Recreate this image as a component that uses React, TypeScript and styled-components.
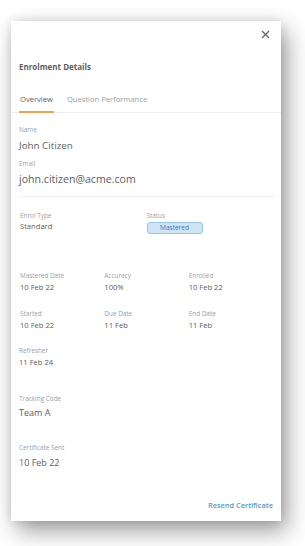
import React from "react";
import styled, { createGlobalStyle } from "styled-components";

const labelColor = "#93a0b3";
const textColor = "#5e5e5e";
const pad = 8;

const GlobalStyle = createGlobalStyle`
  html, body {
    margin: 0;
    padding: 0;
    background: #ffffff;
    font-family: "Open Sans", "Liberation Sans", sans-serif;
  }
`;

const Page = styled.div`
  width: 305px;
  height: 546px;
  overflow: hidden;
  padding: 21px 0 0 11px;
  box-sizing: border-box;
`;

const Card = styled.div`
  width: 270px;
  height: 500px;
  box-sizing: border-box;
  padding: 0 ${pad}px 0;
  background: #fff;
  display: flex;
  flex-direction: column;
  box-shadow: 0 0 10px rgba(0, 0, 0, 0.12), 6px 10px 22px rgba(0, 0, 0, 0.38);
`;

const CloseRow = styled.div`
  height: 26px;
  display: flex;
  justify-content: flex-end;
  align-items: center;
`;

const CloseButton = styled.button`
  border: 0;
  background: none;
  padding: 0;
  margin-right: 3px;
  width: 9px;
  height: 9px;
  display: flex;
  cursor: pointer;
`;

const Title = styled.div`
  margin-top: 14px;
  font-size: 8px;
  line-height: 12px;
  font-weight: 700;
  color: ${textColor};
`;

const TabBar = styled.div`
  margin: 20px -${pad}px 0;
  padding: 0 ${pad}px;
  display: flex;
  gap: 12px;
  border-bottom: 1px solid #eeeeee;
`;

const Tab = styled.div<{ active?: boolean }>`
  font-size: 7.6px;
  line-height: 12px;
  padding: 0 1px 6px;
  color: ${({ active }) => (active ? textColor : "#a0a0a0")};
  border-bottom: 2px solid ${({ active }) => (active ? "#f6a04d" : "transparent")};
  margin-bottom: -1px;
`;

const Field = styled.div<{ top?: number }>`
  margin-top: ${({ top }) => top ?? 0}px;
  display: flex;
  flex-direction: column;
  align-items: flex-start;
`;

const Label = styled.div`
  font-size: 6.4px;
  line-height: 9px;
  color: ${labelColor};
`;

const Value = styled.div<{ size?: number; gap?: number }>`
  margin-top: ${({ gap }) => gap ?? 2}px;
  font-size: ${({ size }) => size ?? 7.6}px;
  line-height: ${({ size }) => Math.round((size ?? 7.6) * 1.5)}px;
  color: ${textColor};
  white-space: nowrap;
`;

const Divider = styled.hr`
  margin: 9px 0 0;
  border: 0;
  border-top: 1px solid #f0f0f0;
  width: 100%;
`;

const Grid = styled.div<{ cols: number; top: number }>`
  margin-top: ${({ top }) => top}px;
  display: grid;
  grid-template-columns: repeat(${({ cols }) => cols}, 1fr);
  padding-left: 1px;
`;

const Badge = styled.div`
  margin-top: 2px;
  width: 56px;
  height: 12px;
  box-sizing: border-box;
  border: 1px solid #93c6ec;
  border-radius: 3px;
  background: #cfe5f6;
  color: #3a78b5;
  font-size: 6.5px;
  line-height: 10px;
  text-align: center;
`;

const Footer = styled.div`
  margin-top: auto;
  padding-bottom: 11px;
  display: flex;
  justify-content: flex-end;
`;

const LinkButton = styled.button`
  border: 0;
  background: none;
  padding: 0;
  font-family: inherit;
  font-size: 7.4px;
  line-height: 10px;
  font-weight: 600;
  color: #4c9cd9;
  cursor: pointer;
`;

const dates1 = [
  { label: "Mastered Date", value: "10 Feb 22" },
  { label: "Accuracy", value: "100%" },
  { label: "Enrolled", value: "10 Feb 22" },
];

const dates2 = [
  { label: "Started", value: "10 Feb 22" },
  { label: "Due Date", value: "11 Feb" },
  { label: "End Date", value: "11 Feb" },
];

function App() {
  return (
    <Page>
      <GlobalStyle />
      <Card>
        <CloseRow>
          <CloseButton aria-label="Close">
            <svg width="9" height="9" viewBox="0 0 9 9">
              <path d="M1 1L8 8M8 1L1 8" stroke="#5f6670" strokeWidth="1.4" />
            </svg>
          </CloseButton>
        </CloseRow>
        <Title>Enrolment Details</Title>
        <TabBar>
          <Tab active>Overview</Tab>
          <Tab>Question Performance</Tab>
        </TabBar>

        <Field top={12}>
          <Label>Name</Label>
          <Value size={9.8} gap={4}>John Citizen</Value>
        </Field>
        <Field top={6}>
          <Label>Email</Label>
          <Value size={10.6} gap={3}>john.citizen@acme.com</Value>
        </Field>
        <Divider />

        <Grid cols={2} top={14}>
          <Field>
            <Label>Enrol Type</Label>
            <Value gap={1}>Standard</Value>
          </Field>
          <Field>
            <Label>Status</Label>
            <Badge>Mastered</Badge>
          </Field>
        </Grid>

        <Grid cols={3} top={37}>
          {dates1.map(d => (
            <Field key={d.label}>
              <Label>{d.label}</Label>
              <Value gap={2}>{d.value}</Value>
            </Field>
          ))}
        </Grid>
        <Grid cols={3} top={16}>
          {dates2.map(d => (
            <Field key={d.label}>
              <Label>{d.label}</Label>
              <Value gap={2}>{d.value}</Value>
            </Field>
          ))}
        </Grid>
        <Field top={15}>
          <Label>Refresher</Label>
          <Value gap={2}>11 Feb 24</Value>
        </Field>

        <Field top={26}>
          <Label>Tracking Code</Label>
          <Value size={9} gap={3}>Team A</Value>
        </Field>
        <Field top={23}>
          <Label>Certificate Sent</Label>
          <Value size={9} gap={4}>10 Feb 22</Value>
        </Field>

        <Footer>
          <LinkButton>Resend Certificate</LinkButton>
        </Footer>
      </Card>
    </Page>
  );
}

export default App;
